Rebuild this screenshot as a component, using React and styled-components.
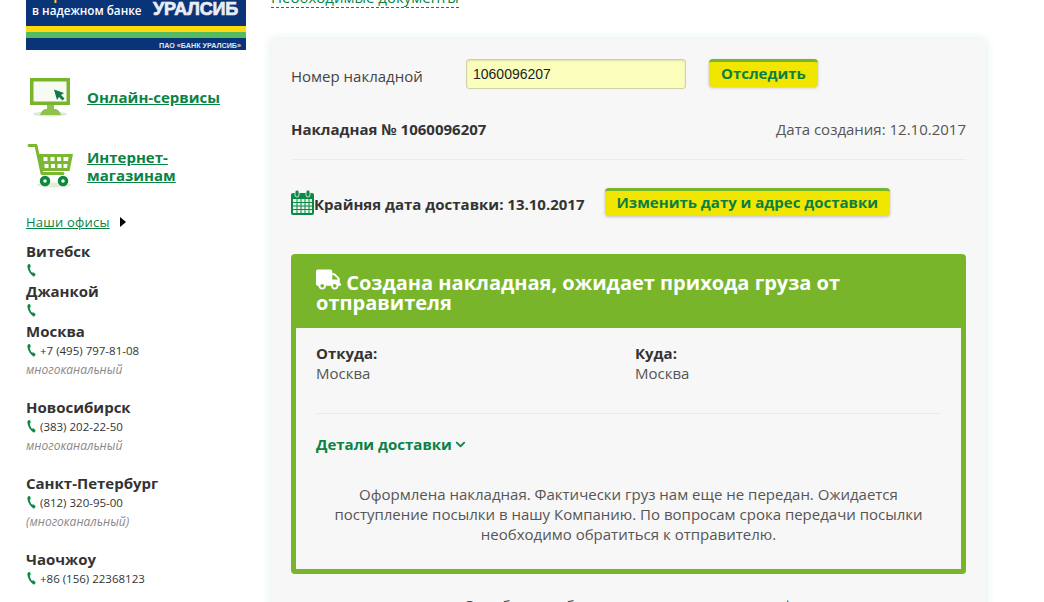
import React from 'react';
import styled, { createGlobalStyle } from 'styled-components';
import { FaTruck, FaChevronDown } from 'react-icons/fa';

const Global = createGlobalStyle`
  html, body { margin: 0; padding: 0; background: #fff; overflow: hidden; }
  body { font-family: "Open Sans", "Noto Sans", sans-serif; font-size: 15px; color: #333; }
  * { box-sizing: border-box; }
`;

const Viewport = styled.div`
  width: 1044px; height: 602px; overflow: hidden;
`;
const Page = styled.div`
  display: flex; align-items: flex-start; margin-top: -12px; padding-left: 26px;
`;
const Sidebar = styled.aside`
  width: 220px; flex: none; display: flex; flex-direction: column;
`;
const Banner = styled.div`
  height: 62px; background: #0a3478; display: flex; flex-direction: column; color: #fff;
`;
const BannerTop = styled.div`
  height: 38px; padding: 0 8px 0 6px; display: flex; justify-content: space-between; align-items: flex-end;
`;
const BannerSlogan = styled.div`
  font-size: 11.7px; font-weight: 600; line-height: 14px; padding-bottom: 9px;
  span { display: block; color: #ffd800; font-weight: 700; margin-bottom: 1px; }
`;
const BannerLogo = styled.div`
  font-family: "Liberation Sans", sans-serif; font-weight: 700; font-size: 18px; line-height: 14px;
  padding-bottom: 10px; letter-spacing: -0.2px; color: #e8eef5;
  -webkit-text-stroke: 0.7px #e8eef5;
`;
const Stripe = styled.div`
  height: 6px; flex: none; background: ${p => p.$color};
`;
const BannerFoot = styled.div`
  flex: 1; font-family: "Liberation Sans", sans-serif; font-size: 7.2px; font-weight: 700; text-align: right;
  padding: 3px 5px 0 0; line-height: 9px; color: #dfe6f0;
`;
const Service = styled.div`
  display: flex; align-items: center; height: ${p => p.$h}px; margin-top: ${p => p.$mt}px;
`;
const ServiceIcon = styled.div`
  width: 61px; flex: none; display: flex; padding-left: ${p => p.$pl}px;
`;
const ServiceLink = styled.a`
  font-weight: 700; font-size: 15px; line-height: 18px; color: #0a8344; text-decoration: underline;
`;
const Offices = styled.div`
  display: flex; align-items: center; margin-top: 24px; height: 18px; font-size: 13px; color: #0a8344;
`;
const OfficesLink = styled.a`
  text-decoration: underline; width: 94px; letter-spacing: 0.2px;
`;
const Arrow = styled.i`
  width: 0; height: 0; border-left: 6px solid #000; border-top: 5px solid transparent; border-bottom: 5px solid transparent;
`;
const Cities = styled.div`
  display: flex; flex-direction: column; margin-top: 10px;
`;
const City = styled.div`
  margin-bottom: ${p => p.$mb}px;
`;
const CityName = styled.div`
  font-weight: 700; font-size: 15px; line-height: 20px; color: #333;
`;
const Tel = styled.div`
  display: flex; align-items: center; gap: 4px; height: 19px; margin-bottom: 1px; font-size: 11.5px; color: #333; padding-left: 1px;
`;
const Note = styled.div`
  font-style: italic; font-size: 12px; line-height: 18px; color: #888;
`;

const Main = styled.main`
  margin-left: 25px; width: 715px; flex: none; display: flex; flex-direction: column;
`;
const DocsRow = styled.div`
  height: 21px; display: flex; align-items: flex-start;
`;
const DocsLink = styled.a`
  font-size: 15px; line-height: 19px; color: #0a8344; border-bottom: 1px dashed #0a8344;
`;
const Card = styled.section`
  margin-top: 30px; height: 620px; background: #f7f7f7; border-radius: 4px; padding: 20px;
  box-shadow: 0 0 10px rgba(110, 170, 150, 0.22);
`;
const FormRow = styled.div`
  display: flex; align-items: flex-start; height: 41px;
`;
const FieldLabel = styled.label`
  width: 175px; flex: none; line-height: 34px; color: #444;
`;
const Input = styled.input`
  width: 220px; height: 30px; flex: none; background: #fbffbb; border: 1px solid #cfd2a8; border-radius: 3px;
  padding: 0 6px; font: 14px "Liberation Sans", sans-serif; color: #222; outline: none;
  box-shadow: inset 0 1px 2px rgba(0,0,0,.12);
`;
const Button = styled.button`
  height: 28px; margin-left: ${p => p.$ml}px; padding: 0 12px 3px; flex: none; background: #f1e600; border: none;
  border-top: 3px solid #78b52a; border-radius: 4px; color: #0a8045; font: 700 15px/20px "Open Sans", sans-serif;
  box-shadow: 0 1px 3px rgba(0,0,0,.22);
`;
const InfoRow = styled.div`
  display: flex; justify-content: space-between; align-items: center; height: 20px; margin-top: 19px;
`;
const InvoiceNo = styled.div`
  font-weight: 700; font-size: 15px; color: #333;
`;
const Created = styled.div`
  font-size: 15px; color: #555;
`;
const Divider = styled.hr`
  border: none; border-top: 1px solid #ebebeb; margin: ${p => p.$m}; 
`;
const DeadlineRow = styled.div`
  display: flex; align-items: center; height: 28px; margin-top: 28px;
`;
const Deadline = styled.div`
  font-weight: 700; font-size: 15px; color: #333; padding-top: 4px; margin-right: 20px;
`;
const Status = styled.div`
  margin-top: 38px; border-radius: 4px; background: #78b52a; padding: 0 5px 5px;
`;
const StatusHead = styled.h2`
  margin: 0 -5px; padding: 13px 25px 15px; font: 700 20px/20px "Open Sans", sans-serif; color: #fff;
  svg { vertical-align: -2px; }
`;
const StatusBody = styled.div`
  background: #f7f7f7; padding: 15px 20px 0;
`;
const Route = styled.div`
  display: grid; grid-template-columns: 319px 1fr; line-height: 20px;
`;
const RouteTitle = styled.div`
  font-weight: 700; font-size: 15px; color: #333;
`;
const RouteValue = styled.div`
  color: #555;
`;
const DetailsLink = styled.a`
  display: flex; align-items: center; gap: 3px; font-weight: 700; font-size: 15px; line-height: 20px; color: #0a8344;
`;
const Message = styled.p`
  margin: 30px 0 0; padding-bottom: 25px; text-align: center; line-height: 20px; font-size: 15px; color: #555;
`;
const Footnote = styled.p`
  margin: 21px 0 0; text-align: center; font-size: 15px; line-height: 20px; letter-spacing: 0.25px; color: #444; 
`;

const Phone = () => (
  <svg width="9" height="13" viewBox="0 0 9 13" aria-hidden="true">
    <path d="M1.6.3 3 .1l.8 2.600-1 .8c0 1.600 1 4 2.300 5.300l1.200-.5L8.700 10.300l-.9 1.700c-.5.600-1.200.500-1.700.200C3 10.200.7 6.300.4 2.500.300 1.400.8.700 1.600.300Z" fill="#0b8a46"/>
  </svg>
);
const Monitor = () => (
  <svg width="42" height="40" viewBox="0 0 42 40" aria-hidden="true">
    <ellipse cx="20" cy="37" rx="17" ry="2.500" fill="#dfe9d5"/>
    <path d="M0 1h40v27H0Z" fill="#78b52a"/>
    <path d="M3.500 4.500h33v20h-33Z" fill="#f7faf2"/>
    <path d="M17 28h7v4h-7Z" fill="#8fc24a"/>
    <path d="M10 38c1-3 3-6 6-6h9c3 0 5 3 6 6Z" fill="#8fc24a"/>
    <path d="M24 12.500l10 3.500-3 2 3.500 3.500-2 2-3.500-3.500-2 3Z" fill="#0e7a45"/>
  </svg>
);
const Cart = () => (
  <svg width="47" height="46" viewBox="0 0 47 46" aria-hidden="true">
    <ellipse cx="27" cy="42" rx="17" ry="2.500" fill="#e4ecdc"/>
    <path d="M2 2.500h7l6 28h21" fill="none" stroke="#7ab832" strokeWidth="3" strokeLinecap="round" strokeLinejoin="round"/>
    <path fillRule="evenodd" d="M11 11h35l-3.500 17H15Zm5.500 3v4h4v-4Zm7 0v4h4v-4Zm6.500 0v4h4v-4Zm6.500 0v4h4.500l.5-4ZM17.500 21v4h4v-4Zm6.500 0v4h4v-4Zm6.500 0v4h4v-4Zm6 0v4h3.500l.5-4Z" fill="#7ab832"/>
    <circle cx="18" cy="38" r="3.500" fill="#fff" stroke="#0b8a3c" strokeWidth="3.500"/>
    <circle cx="36" cy="38" r="3.500" fill="#fff" stroke="#0b8a3c" strokeWidth="3.500"/>
  </svg>
);
const Calendar = () => (
  <svg width="23" height="25" viewBox="0 0 23 25" aria-hidden="true" style={{ flex: 'none' }}>
    <rect x="0" y="3" width="23" height="22" rx="2" fill="#0b8a46"/>
    <rect x="4" y="0" width="4" height="7" rx="2" fill="#0b8a46" stroke="#f7f7f7" strokeWidth=".8"/>
    <rect x="15" y="0" width="4" height="7" rx="2" fill="#0b8a46" stroke="#f7f7f7" strokeWidth=".8"/>
    <path d="M2 9h19v14H2Z" fill="#e8f3ea"/>
    <path d="M2 12.500h19M2 16h19M2 19.500h19M6 9v14M10 9v14M14 9v14M18 9v14" stroke="#0b8a46" strokeWidth="1" fill="none"/>
  </svg>
);

const cities = [
  { name: 'Витебск', mb: 0 },
  { name: 'Джанкой', mb: 0 },
  { name: 'Москва', tel: '+7 (495) 797-81-08', note: 'многоканальный', mb: 18 },
  { name: 'Новосибирск', tel: '(383) 202-22-50', note: 'многоканальный', mb: 18 },
  { name: 'Санкт-Петербург', tel: '(812) 320-95-00', note: '(многоканальный)', mb: 18 },
  { name: 'Чаочжоу', tel: '+86 (156) 22368123', mb: 0 },
];

export default function App() {
  return (
    <Viewport>
      <Global />
      <Page>
        <Sidebar>
          <Banner>
            <BannerTop>
              <BannerSlogan><span>Сбережения</span>в надежном банке</BannerSlogan>
              <BannerLogo>УРАЛСИБ</BannerLogo>
            </BannerTop>
            <Stripe $color="#ffd90f" />
            <Stripe $color="#55bb5f" />
            <BannerFoot>ПАО «БАНК УРАЛСИБ»</BannerFoot>
          </Banner>
          <Service $h={40} $mt={27}>
            <ServiceIcon $pl={4}><Monitor /></ServiceIcon>
            <ServiceLink>Онлайн-сервисы</ServiceLink>
          </Service>
          <Service $h={46} $mt={26}>
            <ServiceIcon $pl={1}><Cart /></ServiceIcon>
            <ServiceLink>Интернет-<br />магазинам</ServiceLink>
          </Service>
          <Offices>
            <OfficesLink>Наши офисы</OfficesLink>
            <Arrow />
          </Offices>
          <Cities>
            {cities.map(c => (
              <City key={c.name} $mb={c.mb}>
                <CityName>{c.name}</CityName>
                <Tel><Phone />{c.tel}</Tel>
                {c.note && <Note>{c.note}</Note>}
              </City>
            ))}
          </Cities>
        </Sidebar>
        <Main>
          <DocsRow><DocsLink>Необходимые документы</DocsLink></DocsRow>
          <Card>
            <FormRow>
              <FieldLabel>Номер накладной</FieldLabel>
              <Input defaultValue="1060096207" />
              <Button $ml={23}>Отследить</Button>
            </FormRow>
            <InfoRow>
              <InvoiceNo>Накладная № 1060096207</InvoiceNo>
              <Created>Дата создания: 12.10.2017</Created>
            </InfoRow>
            <Divider $m="20px 0 0" />
            <DeadlineRow>
              <Calendar />
              <Deadline>Крайняя дата доставки: 13.10.2017</Deadline>
              <Button $ml={0}>Изменить дату и адрес доставки</Button>
            </DeadlineRow>
            <Status>
              <StatusHead><FaTruck size={25} /> Создана накладная, ожидает прихода груза от отправителя</StatusHead>
              <StatusBody>
                <Route>
                  <RouteTitle>Откуда:</RouteTitle>
                  <RouteTitle>Куда:</RouteTitle>
                  <RouteValue>Москва</RouteValue>
                  <RouteValue>Москва</RouteValue>
                </Route>
                <Divider $m="30px 0 20px" />
                <DetailsLink>Детали доставки <FaChevronDown size={11} /></DetailsLink>
                <Message>
                  Оформлена накладная. Фактически груз нам еще не передан. Ожидается поступление посылки в нашу Компанию. По вопросам срока передачи посылки необходимо обратиться к отправителю.
                </Message>
              </StatusBody>
            </Status>
            <Footnote>Служба вам обещает скорость и наш тариф</Footnote>
          </Card>
        </Main>
      </Page>
    </Viewport>
  );
}
